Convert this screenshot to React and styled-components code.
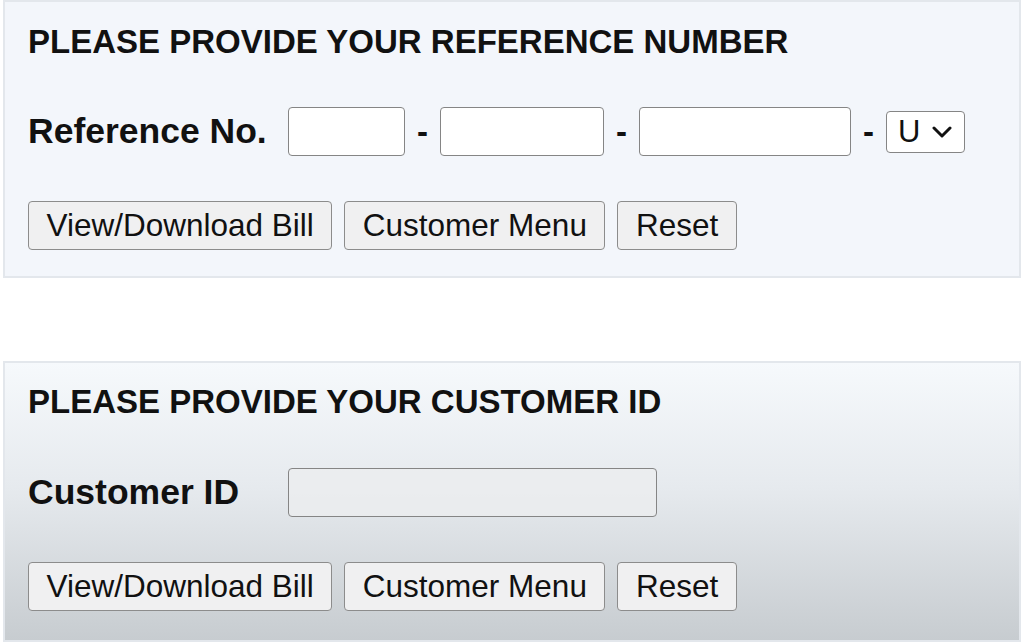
import React from "react";
import styled, { createGlobalStyle } from "styled-components";

const Global = createGlobalStyle`
  html, body { margin: 0; padding: 0; background: #ffffff; }
  body { font-family: "Liberation Sans", Arial, sans-serif; color: #111; }
`;

const Page = styled.div`
  width: 1024px;
  height: 642px;
  overflow: hidden;
  display: flex;
  flex-direction: column;
  gap: 83px;
  padding: 0 3px 0 3px;
  box-sizing: border-box;
`;

const Panel = styled.section`
  box-sizing: border-box;
  width: 1018px;
  height: ${(p) => p.$h}px;
  padding: ${(p) => p.$pt}px 0 0 23px;
  border: 2px solid #e3e7ec;
  background: ${(p) =>
    p.$gradient
      ? "linear-gradient(180deg, #f6f9fc 0%, #e6eaee 45%, #c7ccd0 100%)"
      : "#f3f6fb"};
  display: flex;
  flex-direction: column;
`;

const Title = styled.h2`
  margin: 0;
  font-size: 33px;
  line-height: 38px;
  font-weight: bold;
  color: #111;
  white-space: nowrap;
`;

const FieldRow = styled.div`
  display: flex;
  align-items: center;
  margin-top: ${(p) => p.$mt}px;
  height: 49px;
`;

const Label = styled.label`
  width: 260px;
  flex: none;
  font-size: 35.5px;
  font-weight: bold;
  color: #111;
  white-space: nowrap;
`;

const Inputs = styled.div`
  display: flex;
  align-items: center;
  gap: 11px;
`;

const TextBox = styled.input`
  box-sizing: border-box;
  width: ${(p) => p.$w}px;
  height: 49px;
  border: 1.5px solid #858585;
  border-radius: 4px;
  background: ${(p) => (p.$muted ? "rgba(236, 238, 239, 0.75)" : "#ffffff")};
  padding: 0 8px;
  font: 30px "Liberation Sans", Arial, sans-serif;
  outline: none;
`;

const Dash = styled.span`
  font-size: 33px;
  font-weight: bold;
  width: 13px;
  text-align: center;
  color: #111;
`;

const SelectBox = styled.div`
  box-sizing: border-box;
  width: 79px;
  height: 42px;
  border: 1.5px solid #858585;
  border-radius: 4px;
  background: #fff;
  display: flex;
  align-items: center;
  gap: 12px;
  padding-left: 11px;
  font-size: 31px;
  color: #111;
`;

const Buttons = styled.div`
  display: flex;
  gap: 12px;
  margin-top: 45px;
`;

const Button = styled.button`
  box-sizing: border-box;
  height: 49px;
  padding: 0 17.5px;
  border: 1.5px solid #8c8c8c;
  border-radius: 4px;
  background: #f0f0f1;
  font: 31.5px "Liberation Sans", Arial, sans-serif;
  color: #111;
  white-space: nowrap;
`;

const Chevron = () => (
  <svg width="20" height="12" viewBox="0 0 20 12">
    <path d="M2 2 L10 10 L18 2" fill="none" stroke="#111" strokeWidth="3" strokeLinecap="round" strokeLinejoin="round" />
  </svg>
);

const ButtonBar = () => (
  <Buttons>
    <Button>View/Download Bill</Button>
    <Button>Customer Menu</Button>
    <Button>Reset</Button>
  </Buttons>
);

export default function App() {
  return (
    <>
      <Global />
      <Page>
        <Panel $h={278} $pt={21}>
          <Title>PLEASE PROVIDE YOUR REFERENCE NUMBER</Title>
          <FieldRow $mt={46}>
            <Label>Reference No.</Label>
            <Inputs>
              <TextBox $w={117} />
              <Dash>-</Dash>
              <TextBox $w={164} />
              <Dash>-</Dash>
              <TextBox $w={212} />
              <Dash>-</Dash>
              <SelectBox>
                U <Chevron />
              </SelectBox>
            </Inputs>
          </FieldRow>
          <ButtonBar />
        </Panel>
        <Panel $h={281} $pt={20} $gradient>
          <Title>PLEASE PROVIDE YOUR CUSTOMER ID</Title>
          <FieldRow $mt={47}>
            <Label>Customer ID</Label>
            <TextBox $w={369} $muted />
          </FieldRow>
          <ButtonBar />
        </Panel>
      </Page>
    </>
  );
}
